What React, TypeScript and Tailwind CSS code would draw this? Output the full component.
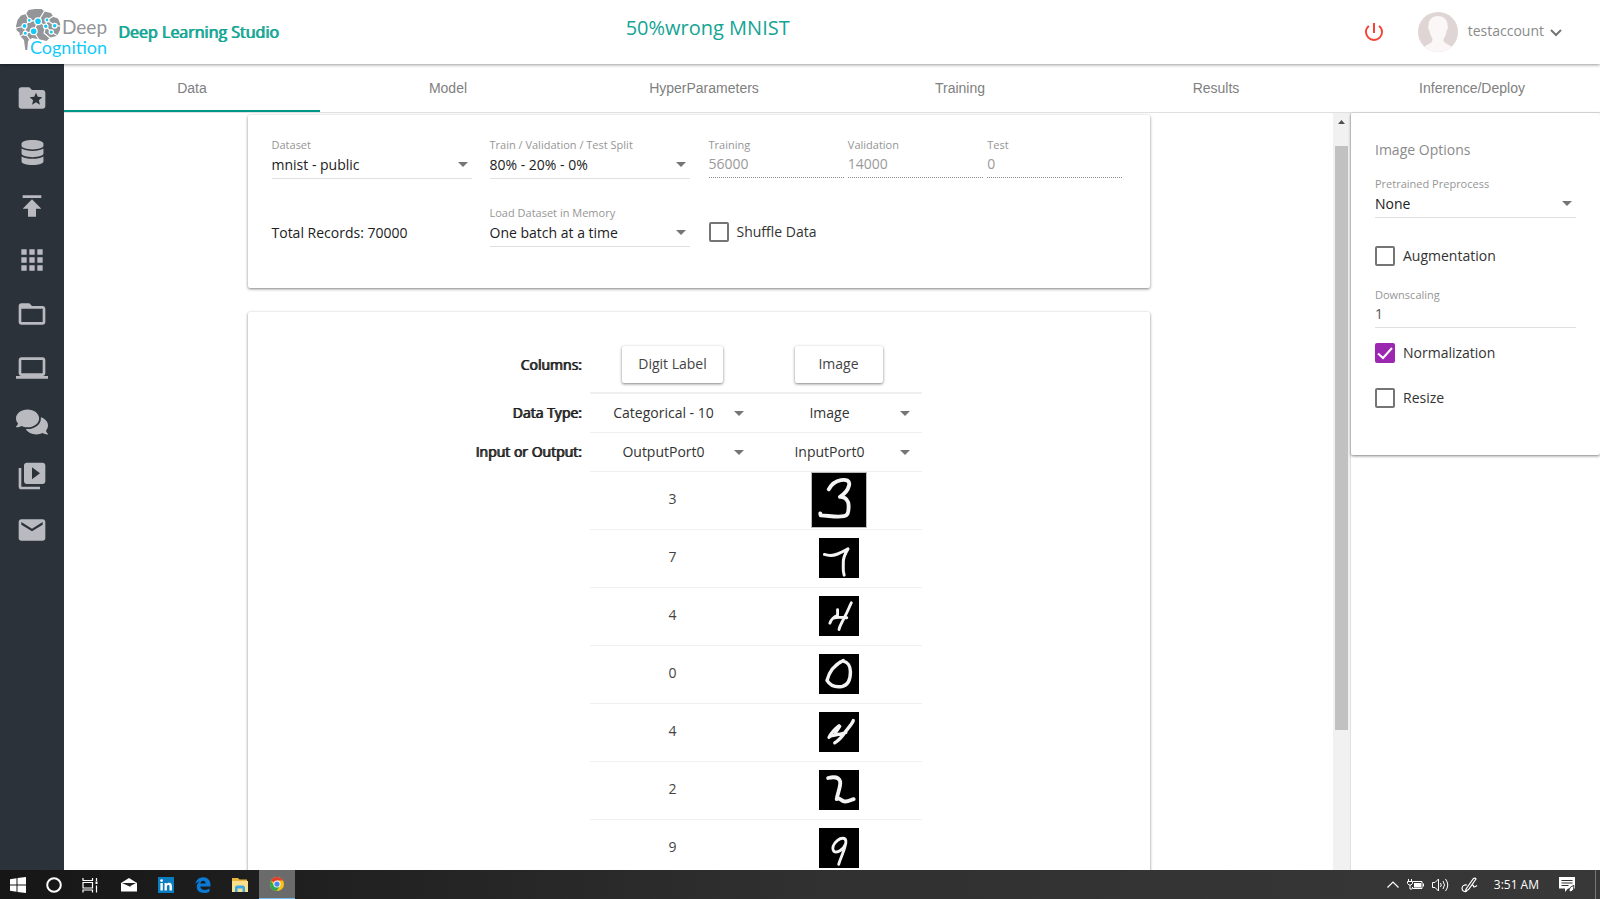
import { useState } from "react";
import type { ReactNode } from "react";
import {
  MdApps,
  MdEmail,
  MdFolderOpen,
  MdFolderSpecial,
  MdLaptop,
  MdPowerSettingsNew,
  MdPublish,
  MdVideoLibrary,
} from "react-icons/md";
import { FaComments, FaDatabase } from "react-icons/fa";

const TABS = ["Data", "Model", "HyperParameters", "Training", "Results", "Inference/Deploy"];

const NAV = [
  { label: "Projects", icon: <MdFolderSpecial className="size-8" /> },
  { label: "Datasets", icon: <FaDatabase className="size-[25px]" /> },
  { label: "Upload", icon: <MdPublish className="size-8" /> },
  { label: "Apps", icon: <MdApps className="size-8" /> },
  { label: "Files", icon: <MdFolderOpen className="size-8" /> },
  { label: "Notebooks", icon: <MdLaptop className="size-8" /> },
  { label: "Forum", icon: <FaComments className="size-8" /> },
  { label: "Videos", icon: <MdVideoLibrary className="size-8" /> },
  { label: "Contact", icon: <MdEmail className="size-8" /> },
];

// Stroke paths on a 28x28 grid, same as the samples themselves
const SAMPLES = [
  { digit: "3", width: 2, path: "M8.7 8.5 C10 6 12 4.2 15 3.7 C18 3.3 19.8 4 19.2 6.5 C18.6 9 17 10.8 14.5 12.4 C17.5 12.3 19 14.5 19 17 C19 20.5 18.6 22 16.5 22.4 C13 23 9 22.2 4.5 22 L4.3 21" },
  { digit: "7", width: 2.1, path: "M3.8 11.5 C7 12.6 10 12.4 13 11.2 C16 10 18 8.8 20.3 7.6 C18.5 10.5 17 13 17 17 C17.2 20 16.4 22 17.6 26" },
  { digit: "4", width: 2, path: "M13 9.5 L13 13.5 C10.5 14.5 8.5 16.5 7.6 19 M10 15.5 C13 14.5 16 15 19.5 15.2 M22.6 4.8 C21 8 20 11 18 14.5 C16.5 18 14.5 20.5 14 23.5" },
  { digit: "0", width: 2.4, path: "M17 4.6 C11 7.5 7 13 5.6 18.5 C8 22.5 12 23.4 16 22.8 C20.6 22 22 17 22 12.5 C22 8.5 20 5.5 17 5 C14.6 4.8 14 6.4 12.5 7.6" },
  { digit: "4", width: 2.3, path: "M14 9.6 C11.5 11.5 8.8 14 7 17.8 C8.5 15.6 13 16.6 18.8 14.4 M24 6 C22.8 9 20.5 11 18 14.5 C15.6 18 13.6 20 11 21.6 M14.5 10 L11.5 14.5" },
  { digit: "2", width: 2.7, path: "M6.4 5.6 C10.5 4.6 14 5.2 14.8 8 C15.4 11.5 13 16 12.4 20.4 C13 18.8 15 20.6 17 21.8 C19.5 22.8 22.5 20.8 24.3 20.4" },
  { digit: "9", width: 2, path: "M18.8 9 C18.5 6.6 15.5 6.6 13 8.6 C10 11 8.8 14 10.5 16.4 C13 17.8 17 15 18.7 11 C19 8.6 18.8 8 18.2 7.6 M18.6 11 C18.2 15 15.5 20 13.8 25.4" },
];

function Arrow({ className = "" }: { className?: string }) {
  return (
    <svg viewBox="0 0 10 5" className={`pointer-events-none h-[5px] w-[10px] ${className}`} fill="#757575">
      <path d="M0 0h10L5 5z" />
    </svg>
  );
}

function SelectField({ id, label, value }: { id: string; label: string; value: string }) {
  return (
    <div className="flex w-full flex-col">
      <label htmlFor={id} className="text-[11px] leading-4 text-[#969696]">
        {label}
      </label>
      <div className="relative flex items-center border-b border-[#e0e0e0] pb-[2px]">
        <select id={id} className="h-[23px] w-full appearance-none bg-transparent text-sm text-[#212121] outline-none">
          <option>{value}</option>
        </select>
        <Arrow className="absolute right-1" />
      </div>
    </div>
  );
}

function CountField({ id, label, value }: { id: string; label: string; value: string }) {
  return (
    <div className="flex min-w-0 flex-1 flex-col">
      <label htmlFor={id} className="text-[11px] leading-4 text-[#969696]">
        {label}
      </label>
      <input
        id={id}
        disabled
        value={value}
        className="h-[25px] w-full border-b border-dotted border-[#8a8a8a] bg-transparent pb-1 text-sm text-[#9a9a9a]"
      />
    </div>
  );
}

function CheckField({ label, initial = false }: { label: string; initial?: boolean }) {
  const [checked, setChecked] = useState(initial);
  return (
    <label className="flex items-center gap-2 text-sm leading-5 text-[#333]">
      <span className="relative flex size-5">
        <input
          type="checkbox"
          checked={checked}
          onChange={(e) => setChecked(e.target.checked)}
          className="size-5 appearance-none rounded-xs border-2 border-[#757575] checked:border-[#9c27b0] checked:bg-[#9c27b0]"
        />
        {checked && (
          <svg viewBox="0 0 20 20" className="pointer-events-none absolute inset-0" fill="none" stroke="#fff" strokeWidth="2">
            <path d="M3 10.5l5 4.5L17 5" />
          </svg>
        )}
      </span>
      {label}
    </label>
  );
}

function CellSelect({ label, value }: { label: string; value: string }) {
  return (
    <div className="relative flex items-center">
      <select
        aria-label={label}
        className="h-[38px] w-full appearance-none bg-transparent pr-[18px] text-center text-sm text-[#333] outline-none"
      >
        <option>{value}</option>
      </select>
      <Arrow className="absolute right-3" />
    </div>
  );
}

function Logo() {
  return (
    <svg viewBox="0 0 94 52" className="h-[52px] w-[94px]" role="img" aria-label="Deep Cognition">
      <path
        d="M0 18 L1.500 12 L5 7.500 L10 6 L12.500 2 L19 1 L25.500 1 L28.500 3.500 L35 5 L37.500 9 L42 10.500 L44.300 16 L44 22 L41 28 L34 29.500 L30.500 33 L24 31.500 L16 30 L12 33 L11.300 42 L9.300 42 L8 32 L4 28 L3.500 24.500 L0.700 22.500z"
        fill="#939598"
      />
      <g fill="none" stroke="#fff" strokeWidth="1.200">
        <path d="M10 6 L13.300 12.300 L9 18 L0 20" />
        <path d="M13.300 12.300 L22 13.300 L28.500 3" />
        <path d="M22 13.300 L17.700 23.300 L9.300 25.300 L3 29" />
        <path d="M9 18 L9.300 25.300 L14 32" />
        <path d="M22 13.300 L29.700 18.300 L31 12 L37.500 8" />
        <path d="M29.700 18.300 L35.300 24 L42 28" />
        <path d="M31 12 L38.700 17.700 L45 18" />
        <path d="M17.700 23.300 L23 32" />
        <path d="M29.700 18.300 L28 25 L34 30" />
      </g>
      <g fill="#12cbfb" stroke="#fff" strokeWidth="1.200">
        <circle cx="22" cy="13.300" r="3.400" />
        <circle cx="17.700" cy="23.300" r="3.400" />
        <circle cx="8.500" cy="18" r="2.500" />
        <circle cx="13.300" cy="12.300" r="2" />
        <circle cx="31" cy="12" r="2" />
        <circle cx="38.700" cy="17.700" r="2.400" />
        <circle cx="29.700" cy="18.300" r="2.300" />
        <circle cx="35.300" cy="24" r="2.100" />
        <circle cx="9.300" cy="25.300" r="2.100" />
      </g>
      <text x="46" y="26" fontFamily="Lato, sans-serif" fontSize="19" fill="#939598">Deep</text>
      <text x="14" y="46" fontFamily="Lato, sans-serif" fontSize="18" fill="#12cbfb">Cognition</text>
    </svg>
  );
}

function Avatar() {
  return (
    <svg viewBox="0 0 40 40" className="size-10">
      <defs>
        <clipPath id="avatar-clip">
          <circle cx="20" cy="20" r="20" />
        </clipPath>
      </defs>
      <g clipPath="url(#avatar-clip)">
        <rect width="40" height="40" fill="#ded5d4" />
        <path
          d="M20 4 C14 4 10.500 8 10.500 13 C10 15 10 17 11.500 19 C12 23 14 25 14.500 27 C14.500 30 13 31 9 33 C6 34 4 37 3 41 H37 C36 36 34 34 31 33 C27 31 25.500 30 25.500 27 C27 25 28 23 28.500 19 C30 17 30 15 29.500 13 C29.500 8 26 4 20 4z"
          fill="#faf7f6"
        />
      </g>
    </svg>
  );
}

function TaskButton({ label, active = false, children }: { label: string; active?: boolean; children: ReactNode }) {
  return (
    <button
      aria-label={label}
      className={`flex h-full w-9 items-center justify-center ${active ? "border-b border-[#76b9ed] bg-[#6b6b6b]" : ""}`}
    >
      {children}
    </button>
  );
}

function Taskbar() {
  return (
    <footer className="flex h-[29px] shrink-0 items-center justify-between bg-linear-to-r from-[#161616] via-[#303030] to-[#383838] text-white">
      <div className="flex h-full items-center gap-[3px]">
        <div className="flex h-full items-center">
          <TaskButton label="Start">
            <svg viewBox="0 0 16 16" className="size-4" fill="#fff">
              <path d="M0 2.200L6.500 1.300V7.500H0zM7.500 1.100L16 0V7.500H7.500zM0 8.500H6.500V14.700L0 13.800zM7.500 8.500H16V16L7.500 14.900z" />
            </svg>
          </TaskButton>
          <TaskButton label="Cortana">
            <svg viewBox="0 0 16 16" className="size-4" fill="none" stroke="#fff" strokeWidth="2">
              <circle cx="8" cy="8" r="6.800" />
            </svg>
          </TaskButton>
          <TaskButton label="Task view">
            <svg viewBox="0 0 17 16" className="h-4 w-[17px]" fill="none" stroke="#fff" strokeWidth="1.200">
              <path d="M1 1v2.500h9.500V1M1 5.500h9.500v5.500H1zM1 15.500V13h9.500v2.500M14.500 1v3M14.500 8.500V15.500" />
              <path d="M13.500 4.500h2v2.500h-2z" fill="#fff" stroke="none" />
            </svg>
          </TaskButton>
        </div>
        <div className="flex h-full items-center gap-px">
          <TaskButton label="Mail">
            <svg viewBox="0 0 16 14" className="h-[14px] w-4">
              <path d="M0 5 L8 0 L16 5 V13.500 H0z" fill="#fff" />
              <path d="M1 5 H15 L9 8.200 L10.800 9.500z" fill="#222" />
            </svg>
          </TaskButton>
          <TaskButton label="LinkedIn">
            <svg viewBox="0 0 16 16" className="size-4">
              <rect width="16" height="16" fill="#0a7cc0" />
              <g fill="#fff">
                <circle cx="3.600" cy="3.600" r="1.400" />
                <path d="M2.400 6h2.400v7.500H2.400zM6.500 6h2.300v1.100c.5-.8 1.300-1.300 2.400-1.300 2 0 2.700 1.300 2.700 3.400v4.300h-2.400V9.600c0-1.100-.3-1.700-1.200-1.700s-1.400.7-1.400 1.800v3.800H6.500z" />
              </g>
            </svg>
          </TaskButton>
          <TaskButton label="Edge">
            <svg viewBox="0 0 16 16" className="size-4" fill="#0a7ad6">
              <path d="M.4 7.200C1 3 4 .2 8.200.2c4.600 0 7.300 3.300 7.300 7.500v1.700H5.300c.1 2.300 2 3.500 4.600 3.500 1.800 0 3.300-.5 4.600-1.300v3.200c-1.500.8-3.400 1.200-5.400 1.200-4.500 0-7.400-2.400-7.400-6.200 0-2.300 1.200-4.200 3.200-5.300C2.600 4.900 1.200 5.900.4 7.200zM5.400 6.500h5.200c0-1.700-.8-2.700-2.500-2.700S5.600 5 5.400 6.500z" />
            </svg>
          </TaskButton>
          <TaskButton label="File Explorer">
            <svg viewBox="0 0 16 14" className="h-[14px] w-4">
              <path d="M0 0h6l1.500 1.500H15V4H0z" fill="#e9b53a" />
              <path d="M0 3h16v11H0z" fill="#fbe08c" />
              <path d="M3 14V9l1.500-1.500h7L13 9v5h-2.500v-3.500h-5V14z" fill="#38a9e4" />
            </svg>
          </TaskButton>
          <TaskButton label="Chrome" active>
            <svg viewBox="0 0 16 16" className="size-[14px]">
              <circle cx="8" cy="8" r="8" fill="#fbc116" />
              <path d="M8 8L1.100 4A8 8 0 0 1 14.900 4H8z" fill="#e33b2e" />
              <path d="M8 8L4.500 10L1.100 4A8 8 0 0 0 7.500 16L11.400 10z" fill="#2da94f" />
              <circle cx="8" cy="8" r="4" fill="#fff" />
              <circle cx="8" cy="8" r="3" fill="#4a86ee" />
            </svg>
          </TaskButton>
        </div>
      </div>
      <div className="flex h-full items-center">
        <div className="flex items-center gap-2">
          <svg viewBox="0 0 12 7" className="h-[7px] w-3" fill="none" stroke="#fff" strokeWidth="1.200">
            <path d="M.5 6.500L6 1l5.500 5.500" />
          </svg>
          <svg viewBox="0 0 17 12" className="h-3 w-[17px]" fill="none" stroke="#fff" strokeWidth="1">
            <path d="M6 2.500h9v7H5.500V8M16.500 4.500v3M1.500 0v2M4.500 0v2M.5 2.500h5v2l-1.500 1.500h-2L.5 4.500zM3 6v4h2" />
            <path d="M7 4h7v4.500H7z" fill="#fff" stroke="none" />
          </svg>
          <svg viewBox="0 0 17 14" className="h-[14px] w-[17px]" fill="none" stroke="#fff" strokeWidth="1">
            <path d="M.5 4.500h2.500L6.500 1v12L3 9.500H.5zM8.500 5q1.500 2 0 4M11 3q3 4 0 8M13.500 1q4.500 6 0 12" />
          </svg>
          <svg viewBox="0 0 17 16" className="ml-1 h-4 w-[17px]" fill="none" stroke="#fff" strokeWidth="1.200">
            <path d="M5 12L12.500 1.500q1.500-1 2.500.5L7.500 12.500L4.500 14zM6 8c-3-.5-5 1-5 3.500s3 4 5 2.500M10 9q2.500-2 2.500 0t3.500-.5" />
          </svg>
        </div>
        <span className="mr-5 ml-4 font-['Open_Sans',sans-serif] text-xs">3:51 AM</span>
        <svg viewBox="0 0 16 16" className="mr-5 size-4">
          <path d="M0 0h16v11.500H9L6 15v-3.500H0z" fill="#fff" />
          <path d="M2.500 3.500h11M2.500 6h11M2.500 8.500h7" stroke="#333" />
          <path d="M10 14.500q0-5 5-6q.5 5-3 6.500z" fill="#fff" stroke="#333" />
        </svg>
        <div className="mr-1 h-full w-px bg-[#777]" />
      </div>
    </footer>
  );
}

export default function App() {
  const [tab, setTab] = useState("Data");

  return (
    <div className="flex h-screen flex-col overflow-hidden bg-white font-['Open_Sans',sans-serif] text-sm text-[#212121]">
      {/* Top bar */}
      <header className="relative z-10 flex h-16 shrink-0 items-center bg-white pr-[38px] pl-4 shadow-[0_1px_3px_rgba(0,0,0,0.4)]">
        <div className="flex flex-[15] items-center gap-2">
          <a href="#home" className="mt-1">
            <Logo />
          </a>
          <span className="text-base text-[#12a594] [text-shadow:1px_0_currentColor]">Deep Learning Studio</span>
        </div>
        <h1 className="pb-2 text-xl text-[#12a594]">50%wrong MNIST</h1>
        <div className="flex flex-[19] items-center justify-end">
          <button aria-label="Log out" className="mr-8 text-[#f44336]">
            <MdPowerSettingsNew className="size-6" />
          </button>
          <button className="flex items-center gap-[10px] text-[#8a8a8a]">
            <Avatar />
            <span className="flex items-center gap-[6px] pb-[2px]">
              testaccount
              <svg viewBox="0 0 12 8" className="mt-1 h-2 w-3" fill="none" stroke="#757575" strokeWidth="2">
                <path d="M1 1l5 5 5-5" />
              </svg>
            </span>
          </button>
        </div>
      </header>

      <div className="flex min-h-0 flex-1">
        {/* Side navigation */}
        <nav className="flex w-16 shrink-0 flex-col items-center gap-[22px] bg-[#2b323a] pt-[18px] text-[#b9babf]">
          {NAV.map((item) => (
            <a key={item.label} href="#nav" aria-label={item.label} className="flex size-8 items-center justify-center">
              {item.icon}
            </a>
          ))}
        </nav>

        <div className="flex min-w-0 flex-1 flex-col">
          {/* Tabs */}
          <div role="tablist" className="flex h-[49px] shrink-0 border-b border-[#e0e0e0]">
            {TABS.map((name) => (
              <button
                key={name}
                role="tab"
                aria-selected={tab === name}
                onClick={() => setTab(name)}
                className={`flex-1 border-b-2 pt-[2px] font-['Liberation_Sans',sans-serif] text-sm text-[#808080] ${
                  tab === name ? "border-[#009688]" : "border-transparent"
                }`}
              >
                {name}
              </button>
            ))}
          </div>

          <div className="flex min-h-0 flex-1">
            <main className="flex min-w-0 flex-1 flex-col items-center gap-6 overflow-hidden pt-[2px]">
              {/* Dataset card */}
              <section className="flex h-[173px] w-[902px] max-w-full shrink-0 flex-col gap-[26px] rounded-xs px-6 pt-[22px] shadow-[0_1px_3px_rgba(0,0,0,0.5)]">
                <div className="grid grid-cols-[200px_200px_1fr] gap-x-[18px]">
                  <SelectField id="dataset" label="Dataset" value="mnist - public" />
                  <SelectField id="split" label="Train / Validation / Test Split" value="80% - 20% - 0%" />
                  <div className="flex gap-1 pr-[3px] pl-px">
                    <CountField id="training" label="Training" value="56000" />
                    <CountField id="validation" label="Validation" value="14000" />
                    <CountField id="test" label="Test" value="0" />
                  </div>
                </div>
                <div className="grid grid-cols-[200px_200px_1fr] gap-x-[18px]">
                  <p className="pt-[18px]">Total Records: 70000</p>
                  <SelectField id="memory" label="Load Dataset in Memory" value="One batch at a time" />
                  <div className="pt-[17px] pl-px">
                    <CheckField label="Shuffle Data" />
                  </div>
                </div>
              </section>

              {/* Preview card */}
              <section className="flex min-h-[700px] w-[902px] max-w-full shrink-0 justify-center rounded-xs pt-6 shadow-[0_1px_3px_rgba(0,0,0,0.5)]">
                <table className="mr-1 h-fit w-[450px] table-fixed border-collapse text-center">
                  <colgroup>
                    <col className="w-[118px]" />
                    <col />
                    <col />
                  </colgroup>
                  <tbody className="[&_td]:border-b [&_td]:border-[#f0f0f0] [&_td]:p-0 [&_th]:pr-2 [&_th]:text-right [&_th]:font-normal [&_th]:whitespace-nowrap [&_th]:[text-shadow:1px_0_currentColor]">
                    <tr className="h-[57px] [&>td]:border-b-2">
                      <th scope="row">Columns:</th>
                      <td>
                        <button className="h-[37px] rounded-xs px-4 text-[#444] shadow-[0_1px_3px_rgba(0,0,0,0.5)]">Digit Label</button>
                      </td>
                      <td>
                        <button className="h-[37px] min-w-[88px] rounded-xs px-4 text-[#444] shadow-[0_1px_3px_rgba(0,0,0,0.5)]">Image</button>
                      </td>
                    </tr>
                    <tr className="h-[39px]">
                      <th scope="row">Data Type:</th>
                      <td><CellSelect label="Digit Label data type" value="Categorical - 10" /></td>
                      <td><CellSelect label="Image data type" value="Image" /></td>
                    </tr>
                    <tr className="h-[39px]">
                      <th scope="row" className="flex h-[39px] items-center justify-end">Input or Output:</th>
                      <td><CellSelect label="Digit Label port" value="OutputPort0" /></td>
                      <td><CellSelect label="Image port" value="InputPort0" /></td>
                    </tr>
                    {SAMPLES.map((s, i) => (
                      <tr key={i} className="h-[58px]">
                        <th />
                        <td className="text-[#444]">
                          <p className="mb-1">{s.digit}</p>
                        </td>
                        <td>
                          <svg
                            viewBox="0 0 28 28"
                            className={i === 0 ? "mx-auto mb-px size-14 border border-[#bbb] bg-black" : "mx-auto mb-px size-10 bg-black"}
                            fill="none"
                            stroke="#f4f4f4"
                            strokeWidth={s.width}
                            strokeLinecap="round"
                            strokeLinejoin="round"
                          >
                            <path d={s.path} />
                          </svg>
                        </td>
                      </tr>
                    ))}
                  </tbody>
                </table>
              </section>
            </main>

            {/* Scrollbar */}
            <div className="flex w-[17px] shrink-0 flex-col items-center bg-[#f1f1f1]">
              <svg viewBox="0 0 7 4" className="mt-[7px] h-1 w-[7px]" fill="#505050">
                <path d="M0 4h7L3.500 0z" />
              </svg>
              <div className="mt-[22px] h-[584px] w-[13px] bg-[#c1c1c1]" />
            </div>

            {/* Image options */}
            <aside className="w-[250px] shrink-0 border-l border-[#e0e0e0]">
              <div className="flex h-[342px] flex-col rounded-xs px-6 pt-[27px] shadow-[0_1px_3px_rgba(0,0,0,0.5)]">
                <h2 className="mb-4 leading-5 text-[#8a8a8a]">Image Options</h2>
                <SelectField id="preprocess" label="Pretrained Preprocess" value="None" />
                <div className="mt-7 mb-[21px]">
                  <CheckField label="Augmentation" />
                </div>
                <label htmlFor="downscaling" className="text-[11px] leading-4 text-[#969696]">
                  Downscaling
                </label>
                <input
                  id="downscaling"
                  defaultValue="1"
                  className="mb-[15px] h-[25px] w-full shrink-0 border-b border-[#e0e0e0] pb-1 text-sm text-[#555] outline-none"
                />
                <div className="flex flex-col gap-[25px]">
                  <CheckField label="Normalization" initial />
                  <CheckField label="Resize" />
                </div>
              </div>
            </aside>
          </div>
        </div>
      </div>

      <Taskbar />
    </div>
  );
}
